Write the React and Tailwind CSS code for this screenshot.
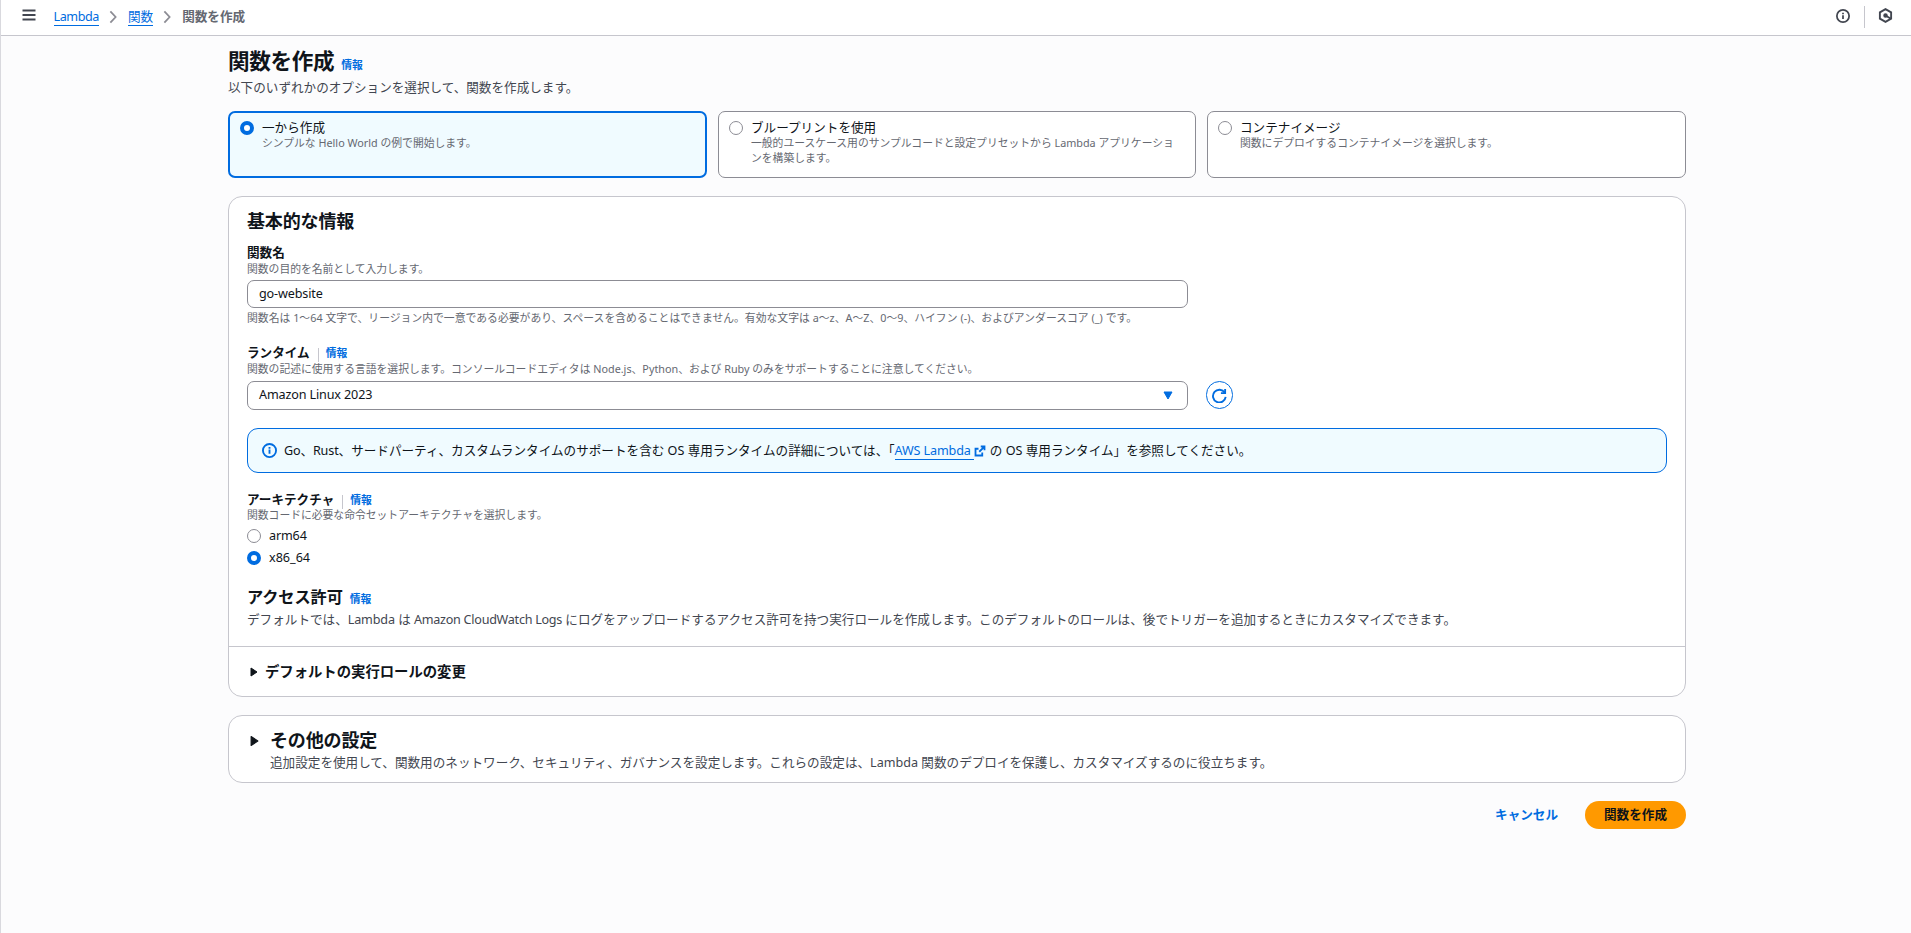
function Info({ className = '' }) {
  return <a className={`text-[10.8px] font-bold text-[#006ce0] ${className}`}>情報</a>;
}

function Radio({ checked, className = '' }) {
  return (
    <span
      className={`box-border block size-[14px] shrink-0 rounded-full bg-white ${checked ? 'border-[4.5px] border-[#006ce0]' : 'border border-[#8c8c94]'} ${className}`}
    />
  );
}

function OptionCard({ title, text, checked }) {
  return (
    <div
      className={`box-border flex h-[67px] rounded-[7px] ${checked ? 'border-2 border-[#006ce0] bg-[#f0fbff] pt-[7px] pl-[10px]' : 'border border-[#8c8c94] bg-white pt-[8px] pl-[10px]'}`}
    >
      <Radio checked={checked} className="mt-[1px]" />
      <div className="ml-[8px] w-[430px]">
        <div className="h-[15px] leading-[16px]">{title}</div>
        <div className="text-[10.8px] leading-[15px] text-[#656871]">{text}</div>
      </div>
    </div>
  );
}

function Label({ children, info, className = '' }) {
  return (
    <div className={`flex h-[18px] items-center leading-[18px] ${className}`}>
      <span className="font-bold">{children}</span>
      {info && (
        <>
          <span className="mt-[3px] ml-[8px] h-[14px] w-px bg-[#c6c6cd]" />
          <Info className="ml-[7px]" />
        </>
      )}
    </div>
  );
}

function Hint({ children, className = '' }) {
  return <div className={`h-[14px] text-[10.8px] leading-[14px] text-[#656871] ${className}`}>{children}</div>;
}

function Chevron({ className = '' }) {
  return (
    <svg className={`h-[14px] w-[14px] ${className}`} viewBox="0 0 16 16" fill="none" stroke="#8c8c94" strokeWidth="2">
      <path d="M5 1.5 11 8l-6 6.5" />
    </svg>
  );
}

function InfoIcon({ className }) {
  return (
    <svg className={className} viewBox="0 0 16 16" fill="none" stroke="currentColor" strokeWidth="2">
      <circle cx="8" cy="8" r="7" />
      <path d="M8 11.5V7M8 6V4.3" />
    </svg>
  );
}

function Caret({ className }) {
  return (
    <svg className={className} viewBox="0 0 8 10" fill="#0f141a" stroke="#0f141a" strokeWidth="1" strokeLinejoin="round">
      <path d="M1 1v8l6-4z" />
    </svg>
  );
}

export default function App() {
  return (
    <div className="flex h-[933px] w-[1911px] flex-col overflow-hidden border-l border-[#d9d9de] bg-[#fcfcfd] font-['Noto_Sans','Noto_Sans_CJK_JP',sans-serif] text-[12.6px] text-[#0f141a]">
      <header className="flex h-[36px] shrink-0 items-start border-b border-[#c6c6cd] bg-white">
        <svg className="mt-[8px] ml-[21px] size-[14px]" viewBox="0 0 14 14" stroke="#424650" strokeWidth="1.8">
          <path d="M0.5 2.5h13M0.5 7h13M0.5 11.5h13" />
        </svg>
        <nav className="mt-[8px] ml-[17.5px] flex h-[18px] items-center leading-[16px]">
          <a className="h-[17px] border-b border-[#006ce0] tracking-[-0.42px] text-[#006ce0]">Lambda</a>
          <Chevron className="ml-[7px]" />
          <a className="ml-[8px] h-[17px] border-b border-[#006ce0] text-[#006ce0]">関数</a>
          <Chevron className="ml-[7px]" />
          <span className="ml-[8px] h-[17px] font-bold text-[#656871]">関数を作成</span>
        </nav>
        <div className="mr-[18px] ml-auto flex items-center pt-[6px] text-[#424650]">
          <InfoIcon className="-mt-[3px] size-[14px]" />
          <span className="mx-[13.5px] h-[22px] w-px bg-[#c6c6cd]" />
          <svg className="-mt-[3px] size-[15px]" viewBox="0 0 16 16" fill="none" stroke="currentColor" strokeWidth="2">
            <path d="M8 1.2 14 4.6v6.8L8 14.8 2 11.4V4.6z" />
            <path d="M8 8l5.8 3.4" />
            <circle cx="8" cy="8" r="1.4" fill="currentColor" />
          </svg>
        </div>
      </header>

      <main className="ml-[227px] w-[1458px]">
        <div className="mt-[12px] flex h-[26px] items-baseline leading-[26px]">
          <h1 className="text-[21.6px] font-bold tracking-[-0.35px]">関数を作成</h1>
          <Info className="ml-[7px]" />
        </div>
        <p className="mt-[5px] h-[18px] leading-[18px] text-[#424650]">以下のいずれかのオプションを選択して、関数を作成します。</p>

        <div className="mt-[14px] grid grid-cols-[479px_478px_479px] gap-[11px]">
          <OptionCard checked title="一から作成" text="シンプルな Hello World の例で開始します。" />
          <OptionCard title="ブループリントを使用" text="一般的ユースケース用のサンプルコードと設定プリセットから Lambda アプリケーションを構築します。" />
          <OptionCard title="コンテナイメージ" text="関数にデプロイするコンテナイメージを選択します。" />
        </div>

        <section className="mt-[18px] h-[501px] rounded-[14px] border border-[#c6c6cd] bg-white">
          <div className="h-[449px] px-[18px] pt-[13px]">
            <h2 className="h-[22px] text-[18px] leading-[22px] font-bold tracking-[-0.15px]">基本的な情報</h2>

            <Label className="mt-[12px]">関数名</Label>
            <Hint>関数の目的を名前として入力します。</Hint>
            <div className="mt-[4px] flex h-[28px] w-[941px] items-center rounded-[7px] border border-[#8c8c94] px-[11px]">
              <span className="tracking-[-0.15px]">go-website</span>
            </div>
            <Hint className="mt-[3px] tracking-[0.03px]">
              関数名は 1～64 文字で、リージョン内で一意である必要があり、スペースを含めることはできません。有効な文字は a～z、A～Z、0～9、ハイフン (-)、およびアンダースコア (_) です。
            </Hint>

            <Label info className="mt-[19px]">ランタイム</Label>
            <Hint>関数の記述に使用する言語を選択します。コンソールコードエディタは Node.js、Python、および Ruby のみをサポートすることに注意してください。</Hint>
            <div className="mt-[5px] flex h-[29px]">
              <div className="flex w-[941px] items-center justify-between rounded-[7px] border border-[#8c8c94] pr-[14px] pl-[11px]">
                <span className="tracking-[-0.14px]">Amazon Linux 2023</span>
                <svg className="h-[9px] w-[10px]" viewBox="0 0 10 9" fill="#006ce0" stroke="#006ce0" strokeLinejoin="round">
                  <path d="M1 1h8L5 8z" />
                </svg>
              </div>
              <button className="ml-[18px] flex h-[28px] w-[27px] items-center justify-center rounded-full border-[1.5px] border-[#006ce0] bg-white">
                <svg className="size-[15px]" viewBox="0 0 16 16" fill="none" stroke="#006ce0" strokeWidth="2">
                  <path d="M9.5 5.5H14V1" />
                  <path d="M14.6 9.5A6.8 6.8 0 1 1 13.6 5" />
                </svg>
              </button>
            </div>

            <div className="mt-[18px] flex h-[45px] items-center rounded-[11px] border border-[#006ce0] bg-[#f0fbff] pl-[14px]">
              <InfoIcon className="size-[15px] text-[#006ce0]" />
              <div className="ml-[7px] flex items-center leading-[18px]">
                <span><span className="tracking-[-0.15px]">Go、Rust</span>、サードパーティ、カスタムランタイムのサポートを含む OS 専用ランタイムの詳細については、「</span>
                <a className="mt-px flex h-[18px] items-center border-b border-[#006ce0] pr-[3px] tracking-[-0.12px] text-[#006ce0]">AWS Lambda</a>
                <svg className="size-[12px]" viewBox="0 0 16 16" fill="none" stroke="#006ce0" strokeWidth="2.4">
                  <path d="M9 2h5v5M13.6 2.4 7 9M6 5H2v9h9v-4" />
                </svg>
                <span className="ml-[4px]">の OS 専用ランタイム」を参照してください。</span>
              </div>
            </div>

            <Label info className="mt-[18px]">アーキテクチャ</Label>
            <Hint className="-mt-px">関数コードに必要な命令セットアーキテクチャを選択します。</Hint>
            <div className="mt-[5px] flex h-[18px] items-center gap-[8px]"><Radio /><span className="tracking-[-0.15px]">arm64</span></div>
            <div className="mt-[4px] flex h-[18px] items-center gap-[8px]"><Radio checked />x86_64</div>

            <div className="mt-[20px] flex h-[20px] items-baseline leading-[20px]">
              <h3 className="text-[16.2px] font-bold tracking-[-0.1px]">アクセス許可</h3>
              <Info className="ml-[7px]" />
            </div>
            <p className="mt-[4px] h-[18px] leading-[18px] text-[#424650]">
              デフォルトでは、<span className="tracking-[-0.15px]">Lambda</span> は <span className="tracking-[-0.27px]">Amazon CloudWatch Logs</span> にログをアップロードするアクセス許可を持つ実行ロールを作成します。このデフォルトのロールは、後でトリガーを追加するときにカスタマイズできます。
            </p>
          </div>
          <div className="flex h-[50px] items-center border-t border-[#c6c6cd] pl-[21px]">
            <Caret className="h-[10px] w-[8px]" />
            <span className="ml-[7px] text-[14.4px] font-bold tracking-[-0.05px]">デフォルトの実行ロールの変更</span>
          </div>
        </section>

        <section className="mt-[18px] flex h-[68px] rounded-[14px] border border-[#c6c6cd] bg-white pl-[21px]">
          <Caret className="mt-[19px] h-[12px] w-[9px]" />
          <div className="ml-[11px] pt-[13px]">
            <h2 className="h-[22px] text-[18px] leading-[22px] font-bold tracking-[-0.15px]">その他の設定</h2>
            <p className="mt-[3px] leading-[18px] text-[#424650]">
              追加設定を使用して、関数用のネットワーク、セキュリティ、ガバナンスを設定します。これらの設定は、Lambda 関数のデプロイを保護し、カスタマイズするのに役立ちます。
            </p>
          </div>
        </section>

        <div className="mt-[18px] flex h-[28px] items-center justify-end font-bold">
          <button className="mr-[27px] text-[#006ce0]">キャンセル</button>
          <button className="h-[28px] w-[101px] rounded-full bg-[#ff9900]">関数を作成</button>
        </div>
      </main>
    </div>
  );
}
